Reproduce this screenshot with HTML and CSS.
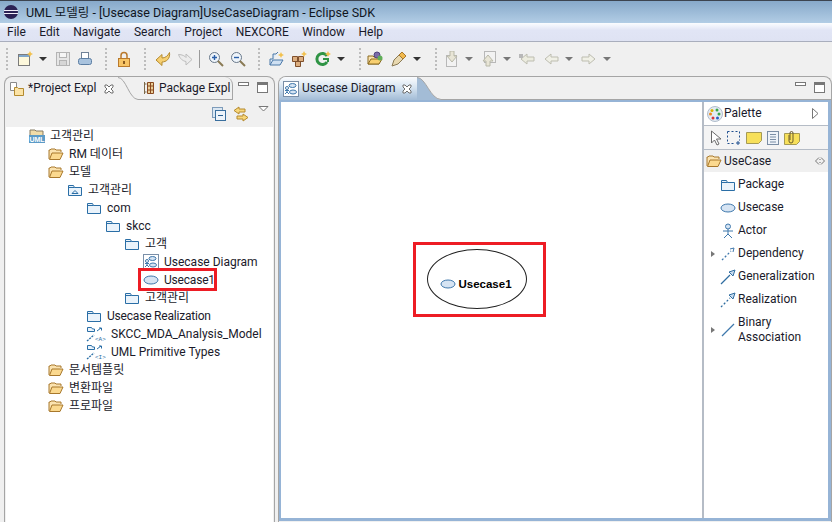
FILE: index.html
```html
<!DOCTYPE html>
<html lang="ko">
<head>
  <meta charset="UTF-8" />
  <title>UML 모델링 - Eclipse SDK</title>
  <link rel="stylesheet" href="styles.css">
</head>
<body>
  <!-- shared icons -->
  <svg class="defs" width="0" height="0">
    <symbol id="folder-open" viewBox="0 0 16 16">
      <path d="M1 13V4h1l1-1h4l1 1h5v2" fill="#fbe3b0" stroke="#a8782c"/>
      <path d="M1.500 13.500 4 7h11l-3 6.500z" fill="#fbd98f" stroke="#a8782c"/>
    </symbol>
    <symbol id="folder-blue" viewBox="0 0 16 16">
      <path d="M1.500 13.500v-10h5l1 2h7v8z" fill="#eaf3fb" stroke="#2a6ea6"/>
      <path d="M1.500 5.500h6" stroke="#2a6ea6"/>
    </symbol>
    <symbol id="oval" viewBox="0 0 16 16">
      <ellipse cx="8" cy="8" rx="7" ry="4" fill="#d6e4f3" stroke="#3f78ac"/>
    </symbol>
    <symbol id="diagram" viewBox="0 0 16 16">
      <rect x=".5" y=".5" width="15" height="15" fill="#fff" stroke="#7a8fa8"/>
      <ellipse cx="9.500" cy="4.500" rx="3.500" ry="2" fill="#d6e4f3" stroke="#3f78ac"/>
      <ellipse cx="10" cy="11" rx="3.500" ry="2" fill="#d6e4f3" stroke="#3f78ac"/>
      <circle cx="4" cy="7" r="1.500" fill="none" stroke="#3f78ac"/>
      <path d="M4 8.500V11M2 13l2-2 2 2M2 9.500h4" fill="none" stroke="#3f78ac"/>
    </symbol>
    <symbol id="model" viewBox="0 0 24 16">
      <path d="M1.500 5.500v-4h4l1 1.500h2v2.500z" fill="#eaf3fb" stroke="#2a6ea6"/>
      <path d="M11 5l4-3M13 2h2.500v2.500" fill="none" stroke="#2a6ea6"/>
      <path d="M1 15l7-6" stroke="#2a6ea6" stroke-width="1.300" stroke-dasharray="2 1"/>
    </symbol>
    <symbol id="tab-close" viewBox="0 0 10 10">
      <path d="M1 1h2l2 2 2-2h2v2L7 5l2 2v2H7L5 7 3 9H1V7l2-2-2-2z" fill="#fff" stroke="#6e6e6e"/>
    </symbol>
    <symbol id="win-min" viewBox="0 0 11 4">
      <rect x=".5" y=".5" width="10" height="3" fill="#fff" stroke="#777"/>
    </symbol>
    <symbol id="win-max" viewBox="0 0 11 11">
      <rect x=".5" y=".5" width="10" height="10" fill="#fff" stroke="#777"/>
      <path d="M1 2h9" stroke="#777" stroke-width="2"/>
    </symbol>
  </svg>

  <header class="titlebar">
    <svg class="app-icon" width="16" height="16" viewBox="0 0 16 16">
      <circle cx="8" cy="8" r="7" fill="#2c2255"/>
      <path d="M1 6.500h14M1 9.500h14" stroke="#f3eef9" stroke-width="1.200"/>
    </svg>
    <span>UML 모델링 - [Usecase Diagram]UseCaseDiagram - Eclipse SDK</span>
  </header>

  <nav class="menubar">
    <span>File</span><span>Edit</span><span>Navigate</span><span>Search</span><span>Project</span><span>NEXCORE</span><span>Window</span><span>Help</span>
  </nav>

  <div class="toolbar">
    <i class="grip"></i>
    <svg class="tool" width="16" height="16" viewBox="0 0 16 16"><rect x="1.500" y="3.500" width="11" height="11" fill="#fdf8dc" stroke="#7b7b7b"/><path d="M2 5h10" stroke="#7fa6cc" stroke-width="2"/><path d="M13 0l1 2 2 1-2 1-1 2-1-2-2-1 2-1z" fill="#f2c14e"/></svg>
    <i class="caret"></i>
    <svg class="tool" width="16" height="16" viewBox="0 0 16 16"><rect x="1.500" y="1.500" width="13" height="13" fill="#e6e6e6" stroke="#b4b4b4"/><rect x="4.500" y="1.500" width="7" height="5" fill="#f6f6f6" stroke="#b4b4b4"/><rect x="4.500" y="9.500" width="7" height="5" fill="#d6d6d6" stroke="#b4b4b4"/></svg>
    <svg class="tool" width="16" height="16" viewBox="0 0 16 16"><rect x="4.500" y="1.500" width="7" height="6" fill="#fff" stroke="#6f8197"/><rect x="1.500" y="7.500" width="13" height="6" rx="2" fill="#a9c3de" stroke="#5c7ea3"/></svg>
    <i class="grip"></i>
    <svg class="tool" width="16" height="16" viewBox="0 0 16 16"><path d="M5 7V4.500a3 3 0 0 1 6 0V7" fill="none" stroke="#b9792c" stroke-width="1.500"/><rect x="2.500" y="7.500" width="11" height="8" fill="#f8c465" stroke="#b9792c"/><rect x="7" y="10" width="2" height="3" fill="#8a5a1e"/></svg>
    <i class="grip"></i>
    <svg class="tool" width="16" height="16" viewBox="0 0 16 16"><path d="M14.500 1.500C15.500 8 11 11 7 11v3.500L1 9l6-5.500V7c3 0 6-2 7.500-5.500z" fill="#f6cf71" stroke="#b58a2e"/></svg>
    <svg class="tool" width="16" height="16" viewBox="0 0 16 16"><path d="M1.500 3.500C5 3.500 8 5 9 6.500V3l6 5.500-6 5.500v-3.500C6 10 3 8 1.500 3.500z" fill="#ececec" stroke="#bdbdbd"/></svg>
    <i class="sep"></i>
    <svg class="tool" width="16" height="16" viewBox="0 0 16 16"><circle cx="6.500" cy="6.500" r="5" fill="#eef4fa" stroke="#68788a"/><path d="M10 10l5 5" stroke="#8a7a54" stroke-width="2"/><path d="M4 6.500h5M6.500 4v5" stroke="#2a5fa8" stroke-width="1.400"/></svg>
    <svg class="tool" width="16" height="16" viewBox="0 0 16 16"><circle cx="6.500" cy="6.500" r="5" fill="#eef4fa" stroke="#68788a"/><path d="M10 10l5 5" stroke="#8a7a54" stroke-width="2"/><path d="M4 6.500h5" stroke="#2a5fa8" stroke-width="1.400"/></svg>
    <i class="grip"></i>
    <svg class="tool" width="16" height="16" viewBox="0 0 16 16"><path d="M1 14V8h3V3h3l2-2" fill="#dfeaf6" stroke="#4b78a8"/><path d="M1 14l3-5h10l-3 5z" fill="#cfe0f2" stroke="#4b78a8"/><path d="M12 1l1 2 2 1-2 1-1 2-1-2-2-1 2-1z" fill="#f2c14e"/></svg>
    <svg class="tool" width="16" height="16" viewBox="0 0 16 16"><path d="M1.500 5.500h5v5h-5zM7.500 5.500h5v5h-5zM4.500 10.500h5v5h-5z" fill="#dcae7f" stroke="#80502c"/><path d="M13 0l1 2 2 1-2 1-1 2-1-2-2-1 2-1z" fill="#f2c14e"/></svg>
    <svg class="tool nudge" width="16" height="16" viewBox="0 0 16 16"><path d="M12 11a5.500 5.500 0 1 1 0-6" fill="none" stroke="#2f9445" stroke-width="3"/><path d="M8 8h5v3" fill="none" stroke="#2f9445" stroke-width="2"/><path d="M13 0l1 2 2 1-2 1-1 2-1-2-2-1 2-1z" fill="#f2c14e"/></svg>
    <i class="caret"></i>
    <i class="grip"></i>
    <svg class="tool back" width="16" height="16" viewBox="0 0 16 16"><path d="M1 13V5h5l1 1h5v7z" fill="#fbe3b0" stroke="#8a6a20"/><path d="M1 13l3-5h11l-3 5z" fill="#f8cf70" stroke="#8a6a20"/><circle cx="10" cy="4" r="3" fill="#7a6aa8" stroke="#4d4380"/><circle cx="13" cy="7" r="2.500" fill="#5fae57"/></svg>
    <svg class="tool nudge" width="16" height="16" viewBox="0 0 16 16"><path d="M1 15l2-6 5-5 4 4-5 5z" fill="#e8d8b0" stroke="#8a7a54"/><path d="M8 4l3-3 4 4-3 3z" fill="#f1b94d" stroke="#a8782c"/></svg>
    <i class="caret"></i>
    <i class="grip"></i>
    <svg class="tool back" width="16" height="16" viewBox="0 0 16 16"><rect x="3.500" y="4.500" width="10" height="11" fill="#f2f2f2" stroke="#b8b8b8"/><path d="M7 0h4v5h3l-5 6-5-6h3z" fill="#e8e5d6" stroke="#b8b8a8"/></svg>
    <i class="caret dim"></i>
    <svg class="tool" width="16" height="16" viewBox="0 0 16 16"><rect x="3.500" y=".5" width="11" height="11" fill="#f2f2f2" stroke="#b8b8b8"/><path d="M5 15v-5H2l5-6 5 6H9v5z" fill="#e8e5d6" stroke="#b8b8a8"/></svg>
    <i class="caret dim"></i>
    <svg class="tool" width="16" height="16" viewBox="0 0 16 16"><path d="M8 3 2 8l6 5v-3h7V6H8z" fill="#ececdf" stroke="#bdbdb0"/><rect x="0" y="3" width="4" height="4" fill="#b8b8b8"/></svg>
    <svg class="tool nudge" width="16" height="16" viewBox="0 0 16 16"><path d="M8 3 2 8l6 5v-3h7V6H8z" fill="#f0f0e6" stroke="#bdbdb0"/></svg>
    <i class="caret dim"></i>
    <svg class="tool" width="16" height="16" viewBox="0 0 16 16"><path d="M8 3l6 5-6 5v-3H1V6h7z" fill="#f0f0e6" stroke="#bdbdb0"/></svg>
    <i class="caret dim"></i>
  </div>

  <main class="workbench">
    <section class="pane explorer">
      <div class="tabbar">
        <div class="tab active">
          <svg width="16" height="16" viewBox="0 0 16 16"><path d="M1.500 1.500h6v8h-6z" fill="#fff" stroke="#8a8a8a"/><path d="M5.500 14.500v-8h3l1 1h5v7z" fill="#fbe3a6" stroke="#b38a2e"/></svg>
          <span>*Project Expl</span>
          <svg class="close" width="10" height="10"><use href="#tab-close"/></svg>
        </div>
        <svg class="tab-curve" width="20" height="23" viewBox="0 0 20 23"><path d="M0 .5C8 .5 11 22 20 22.500V23H0z" fill="#f0f0f0"/><path d="M0 .5C8 .5 11 22 20 22.500" fill="none" stroke="#a5a5a5"/></svg>
        <div class="tab">
          <svg width="12" height="14" viewBox="0 0 12 14"><path d="M1.500 1v12M1.500 3h2M1.500 11h2" stroke="#7d6a4a"/><path d="M4.500 1.500h6v11h-6zM4.500 5h6M4.500 9h6M7.500 1.500v11" fill="#e9cf9a" stroke="#8a4a20"/></svg>
          <span>Package Expl</span>
        </div>
        <div class="win-buttons">
          <svg width="11" height="4"><use href="#win-min"/></svg>
          <svg width="11" height="11"><use href="#win-max"/></svg>
        </div>
      </div>
      <div class="view-tools">
        <svg width="14" height="14" viewBox="0 0 14 14"><rect x="0.500" y=".5" width="10" height="10" fill="#dbe7f2" stroke="#7e9cba"/><rect x="3.500" y="3.500" width="10" height="10" fill="#eef4fa" stroke="#3a6f9e"/><path d="M6 8.500h5" stroke="#2a5f90"/></svg>
        <svg width="16" height="16" viewBox="0 0 16 16"><path d="M6 1 1 4.500 6 8V6h6V3H6z" fill="#f8d77a" stroke="#b58a2e"/><path d="M10 8l5 3.500-5 3.500v-2H4v-3h6z" fill="#f8d77a" stroke="#b58a2e"/></svg>
        <svg class="view-menu" width="11" height="6" viewBox="0 0 11 6"><path d="M1 .5h9L5.500 5z" fill="#fff" stroke="#777"/></svg>
      </div>
      <div class="tree">
        <div class="row lv0"><svg class="ic" width="16" height="16" viewBox="0 0 16 16"><path d="M1 8V2h5l1 1h7v5z" fill="#f1dca8" stroke="#857a62"/><rect x="0" y="7" width="16" height="8" fill="#5c9bc7"/><text x="8" y="14" class="uml-badge">UML</text></svg><span>고객관리</span></div>
        <div class="row lv1"><svg class="ic" width="16" height="16"><use href="#folder-open"/></svg><span>RM 데이터</span></div>
        <div class="row lv1"><svg class="ic" width="16" height="16"><use href="#folder-open"/></svg><span>모델</span></div>
        <div class="row lv2"><svg class="ic" width="16" height="16" viewBox="0 0 16 16"><use href="#folder-blue" width="16" height="16"/><path d="M5 11.500l3-3 3 3z" fill="none" stroke="#2a6ea6"/></svg><span>고객관리</span></div>
        <div class="row lv3"><svg class="ic" width="16" height="16"><use href="#folder-blue"/></svg><span>com</span></div>
        <div class="row lv4"><svg class="ic" width="16" height="16"><use href="#folder-blue"/></svg><span>skcc</span></div>
        <div class="row lv5"><svg class="ic" width="16" height="16"><use href="#folder-blue"/></svg><span>고객</span></div>
        <div class="row lv6"><svg class="ic" width="16" height="16"><use href="#diagram"/></svg><span>Usecase Diagram</span></div>
        <div class="row lv6 tight"><svg class="ic" width="16" height="16"><use href="#oval"/></svg><span>Usecase1</span></div>
        <div class="row lv5"><svg class="ic" width="16" height="16"><use href="#folder-blue"/></svg><span>고객관리</span></div>
        <div class="row lv3 tight"><svg class="ic" width="16" height="16"><use href="#folder-blue"/></svg><span>Usecase Realization</span></div>
        <div class="row lv3 model"><svg class="ic" width="24" height="16" viewBox="0 0 24 16"><use href="#model" width="24" height="16"/><text x="9" y="15" class="model-badge">&lt;A&gt;</text></svg><span>SKCC_MDA_Analysis_Model</span></div>
        <div class="row lv3 model"><svg class="ic" width="24" height="16" viewBox="0 0 24 16"><use href="#model" width="24" height="16"/><text x="9" y="15" class="model-badge">&lt;I&gt;</text></svg><span>UML Primitive Types</span></div>
        <div class="row lv1"><svg class="ic" width="16" height="16"><use href="#folder-open"/></svg><span>문서템플릿</span></div>
        <div class="row lv1"><svg class="ic" width="16" height="16"><use href="#folder-open"/></svg><span>변환파일</span></div>
        <div class="row lv1"><svg class="ic" width="16" height="16"><use href="#folder-open"/></svg><span>프로파일</span></div>
      </div>
      <div class="tree-mark"></div>
    </section>

    <section class="pane editor">
      <div class="tabbar">
        <div class="tab active blue">
          <svg width="16" height="16"><use href="#diagram"/></svg>
          <span>Usecase Diagram</span>
          <svg class="close" width="10" height="10"><use href="#tab-close"/></svg>
        </div>
        <svg class="tab-curve" width="24" height="23" viewBox="0 0 24 23"><path d="M0 .5C9 .5 13 22 24 22.500V23H0z" fill="#a3bcd6"/><path d="M0 .5C9 .5 13 22 24 22.500" fill="none" stroke="#a5a5a5"/></svg>
        <div class="win-buttons">
          <svg width="11" height="4"><use href="#win-min"/></svg>
          <svg width="11" height="11"><use href="#win-max"/></svg>
        </div>
      </div>
      <div class="editor-body">
        <div class="canvas">
          <div class="node">
            <svg width="16" height="16"><use href="#oval"/></svg>
            <span>Usecase1</span>
          </div>
          <div class="mark-node"></div>
        </div>
        <aside class="palette">
          <div class="palette-head">
            <svg width="16" height="16" viewBox="0 0 16 16"><circle cx="8" cy="8" r="7.500" fill="#e4ebf3" stroke="#b0bccb"/><circle cx="5" cy="4.500" r="1.500" fill="#d9b400"/><circle cx="10" cy="4" r="1.500" fill="#3aa64a"/><circle cx="3.500" cy="8" r="1.500" fill="#ee8a1d"/><circle cx="12" cy="8" r="1.500" fill="#3aa64a"/><circle cx="6" cy="12" r="1.500" fill="#d8343a"/><circle cx="10.500" cy="12" r="1.500" fill="#2a5fc8"/></svg>
            <span>Palette</span>
            <svg class="palette-arrow" width="7" height="11" viewBox="0 0 7 11"><path d="M.5.500 6 5.500.5 10.500z" fill="#fff" stroke="#777"/></svg>
          </div>
          <div class="palette-tools">
            <svg width="12" height="16" viewBox="0 0 12 16"><path d="M1.500 1v12l3-3 2.500 5 2-1-2.500-5H11z" fill="#fff" stroke="#6a6a6a"/></svg>
            <svg width="14" height="16" viewBox="0 0 14 16"><path d="M.5 1.500h12v9M.5 1.500v12h8" fill="none" stroke="#1f4f8f" stroke-dasharray="2 2"/><path d="M11 11v4M9 13h4" stroke="#1f4f8f"/></svg>
            <svg width="16" height="12" viewBox="0 0 16 12"><path d="M.5.500h15v8l-3 3H.5z" fill="#f7e05a" stroke="#a59a55"/></svg>
            <svg width="12" height="14" viewBox="0 0 12 14"><rect x=".5" y=".5" width="11" height="13" fill="#eef3f9" stroke="#7b8ea5"/><path d="M3 3.500h6M3 6h6M3 8.500h6M3 11h6" stroke="#7b8ea5"/></svg>
            <svg width="16" height="14" viewBox="0 0 16 14"><path d="M.5 2.500h15v8l-3 3H.5z" fill="#f7e05a" stroke="#a59a55"/><path d="M5 4v6a2 2 0 0 0 4 0V2a1.500 1.500 0 0 0-3 0v7" fill="none" stroke="#6a5a2a"/></svg>
          </div>
          <div class="drawer">
            <svg width="16" height="16"><use href="#folder-open"/></svg>
            <span>UseCase</span>
            <svg class="drawer-pin" width="10" height="8" viewBox="0 0 10 8"><path d="M4 .5.500 4 4 7.500M6 .5 9.500 4 6 7.500" fill="none" stroke="#777"/><path d="M4 2.500h2M4 5.500h2" stroke="#aaa"/></svg>
          </div>
          <ul class="entries">
            <li><svg width="16" height="16"><use href="#folder-blue"/></svg><span>Package</span></li>
            <li><svg width="16" height="16"><use href="#oval"/></svg><span>Usecase</span></li>
            <li><svg width="16" height="16" viewBox="0 0 16 16"><circle cx="8" cy="3.500" r="2.500" fill="#d6e4f3" stroke="#3f78ac"/><path d="M8 6v5M3 8h10M8 11l-4 4M8 11l4 4" fill="none" stroke="#3f78ac"/></svg><span>Actor</span></li>
            <li class="more"><svg width="16" height="16" viewBox="0 0 16 16"><path d="M2 14l9-9" stroke="#3f78ac" stroke-width="1.300" stroke-dasharray="2 2"/><path d="M10 3l4-1-1 4" fill="none" stroke="#3f78ac"/></svg><span>Dependency</span></li>
            <li><svg width="16" height="16" viewBox="0 0 16 16"><path d="M1 15l9-9" stroke="#2f6da0" stroke-width="1.300"/><path d="M9 3l6-2-2 6-2-2z" fill="#c9dcef" stroke="#2f6da0"/></svg><span>Generalization</span></li>
            <li><svg width="16" height="16" viewBox="0 0 16 16"><path d="M1 15l9-9" stroke="#2f6da0" stroke-width="1.300" stroke-dasharray="2 2"/><path d="M9 3l6-2-2 6-2-2z" fill="#c9dcef" stroke="#2f6da0"/></svg><span>Realization</span></li>
            <li class="more"><svg width="16" height="16" viewBox="0 0 16 16"><path d="M2 14 14 2" stroke="#3f78ac" stroke-width="1.300"/></svg><span>Binary<br>Association</span></li>
          </ul>
        </aside>
      </div>
    </section>
  </main>
</body>
</html>
```

FILE: styles.css
```css
* {
  box-sizing: border-box;
}
html, body {
  margin: 0;
  height: 100%;
}
body {
  width: 832px;
  height: 522px;
  overflow: hidden;
  display: flex;
  flex-direction: column;
  background: #f0f0f0;
  color: #1a1a2a;
  font-family: Roboto, "Noto Sans CJK KR", sans-serif;
  font-size: 12px;
  line-height: 15px;
}
svg {
  display: block;
  flex: none;
}
.defs {
  position: absolute;
}

.titlebar {
  height: 23px;
  display: flex;
  align-items: center;
  gap: 7px;
  padding-left: 3px;
  border-top: 1px solid #3c4450;
  background: linear-gradient(#87a9ca, #b2cde5);
  font-size: 12.500px;
  color: #10161e;
}
.menubar {
  height: 19px;
  display: flex;
  gap: 13.500px;
  padding-left: 7px;
  align-items: center;
  border-bottom: 1px solid #a9aebd;
  background: linear-gradient(#fbfdff, #e1e5f5 40%, #dfe3f3);
}

.toolbar {
  height: 34px;
  display: flex;
  align-items: center;
}
.tool {
  margin-right: 6px;
}
.tool.nudge {
  margin-left: 2px;
}
.tool.back {
  margin-left: -3px;
}
.grip {
  width: 2px;
  height: 22px;
  margin: 0 9px 0 6px;
  background: repeating-linear-gradient(#bdbdbd 0 2px, transparent 2px 4px);
}
.caret {
  width: 0;
  height: 0;
  margin-right: 8px;
  border: 4px solid transparent;
  border-top: 4px solid #333;
  border-bottom: 0;
}
.caret.dim {
  border-top-color: #777;
}
.sep {
  width: 1px;
  height: 18px;
  margin-right: 8px;
  background: #9a9a9a;
}

.workbench {
  flex: 1;
  min-height: 0;
  display: flex;
  gap: 3px;
  padding-left: 4px;
}
.pane {
  display: flex;
  flex-direction: column;
  border: 1px solid #a5a5a5;
  border-bottom: 0;
  border-radius: 8px 8px 0 0;
  background: #f0f0f0;
  overflow: hidden;
}
.explorer {
  position: relative;
  width: 271px;
}
.editor {
  flex: 1;
}

.tabbar {
  height: 23px;
  display: flex;
  flex: none;
}
.tab {
  height: 23px;
  width: 95px;
  display: flex;
  align-items: center;
  gap: 4px;
  padding-left: 5px;
  white-space: nowrap;
  border-right: 1px solid #a5a5a5;
  border-bottom: 1px solid #a5a5a5;
  border-radius: 0 8px 0 0;
}
.tab.active {
  width: 113px;
  gap: 3px;
  padding: 0 4px;
  border: 0;
  border-radius: 0;
}
.tab.active.blue {
  width: 138px;
  padding-right: 5px;
  background: linear-gradient(#fbfcfe, #d6e4f1 45%, #a3bcd6);
}
.tab .close {
  margin-left: auto;
}
.win-buttons {
  flex: 1;
  display: flex;
  justify-content: flex-end;
  gap: 8px;
  padding: 4px 6px 0 0;
}
.editor .win-buttons {
  border-bottom: 1px solid #a5a5a5;
}
.win-buttons svg {
  margin-top: 1px;
}

.view-tools {
  height: 27px;
  flex: none;
  display: flex;
  align-items: center;
  justify-content: flex-end;
  gap: 7px;
  padding-right: 5px;
}
.view-menu {
  align-self: flex-start;
  margin: 6px 0 0 2px;
}

.tree {
  flex: 1;
  background: #fff;
  margin: 0 1px;
}
.row {
  height: 18px;
  display: flex;
  align-items: center;
  gap: 5px;
}
.row.tight {
  letter-spacing: -0.200px;
}
.lv0 { padding-left: 23px; }
.lv1 { padding-left: 42px; }
.lv2 { padding-left: 61px; }
.lv3 { padding-left: 80px; }
.lv4 { padding-left: 99px; }
.lv5 { padding-left: 118px; }
.lv6 { padding-left: 137px; }
.row.model {
  gap: 1px;
}
.uml-badge {
  font: bold 7px "Liberation Sans", sans-serif;
  fill: #fff;
  text-anchor: middle;
}
.model-badge {
  font: 6px "Liberation Mono", monospace;
  fill: #2a6ea6;
}

/* red callouts drawn on top of the shot */
.tree-mark {
  position: absolute;
  left: 133px;
  top: 191px;
  width: 79px;
  height: 23px;
  border: 3px solid #ed1c24;
}

.editor-body {
  flex: 1;
  min-height: 0;
  display: flex;
  border: solid #96b4d6;
  border-width: 2px 3px 3px 2px;
  margin-bottom: 1px;
  background: #fff;
}
.canvas {
  position: relative;
  flex: 1;
  border-right: 2px solid #b5bcc6;
}
.node {
  position: absolute;
  left: 146px;
  top: 147px;
  width: 100px;
  height: 60px;
  display: flex;
  align-items: center;
  justify-content: center;
  gap: 2px;
  padding: 10px 2px 0 0;
  border: 1px solid #222;
  border-radius: 50%;
  font: bold 11.500px "Liberation Sans", sans-serif;
  color: #000;
}
.mark-node {
  position: absolute;
  left: 132px;
  top: 140px;
  width: 133px;
  height: 75px;
  border: 3px solid #ed1c24;
}

.palette {
  width: 124px;
  flex: none;
}
.palette-head {
  height: 24px;
  display: flex;
  align-items: center;
  gap: 1px;
  padding-left: 3px;
  border-bottom: 1px solid #b5bcc6;
}
.palette-arrow {
  margin-left: auto;
  margin-right: 9px;
}
.palette-tools {
  height: 24px;
  display: flex;
  align-items: center;
  gap: 5px;
  padding-left: 6px;
  border-bottom: 1px solid #b5bcc6;
  background: #f4f4f4;
}
.drawer {
  height: 22px;
  display: flex;
  align-items: center;
  gap: 2px;
  padding-left: 2px;
  background: #f0f0f0;
}
.drawer-pin {
  margin-left: auto;
  margin-right: 3px;
}
.entries {
  list-style: none;
  margin: 0;
  padding: 1px 0 0;
}
.entries li {
  position: relative;
  min-height: 23px;
  display: flex;
  align-items: center;
  gap: 2px;
  padding-left: 16px;
}
.entries li.more::before {
  content: "";
  position: absolute;
  left: 7px;
  top: 50%;
  margin-top: -3px;
  border: 3px solid transparent;
  border-left: 4px solid #777;
  border-right: 0;
}
.entries li:last-child {
  min-height: 38px;
}
```
